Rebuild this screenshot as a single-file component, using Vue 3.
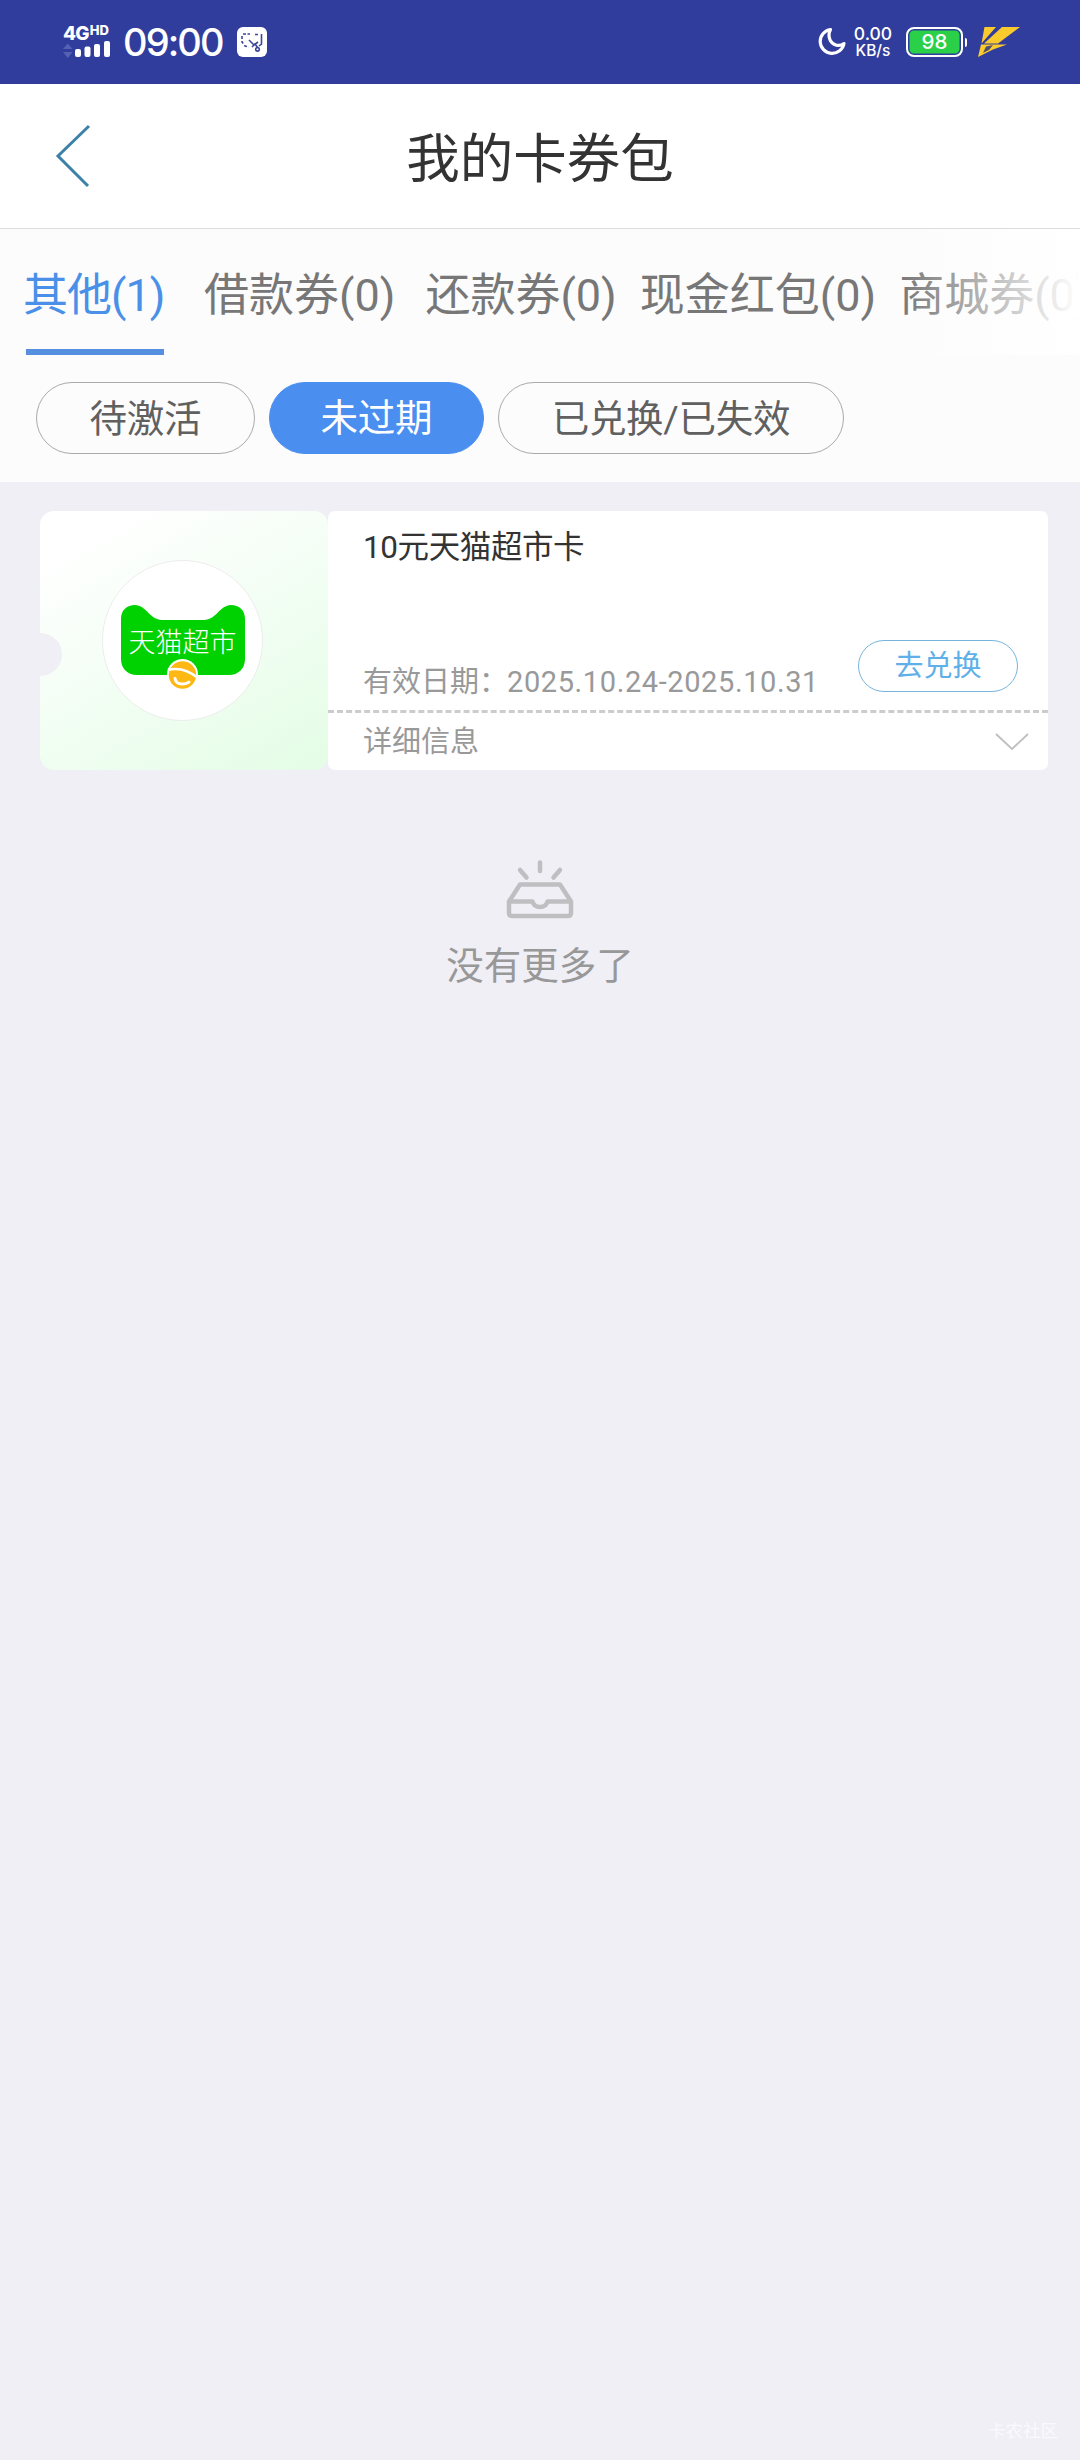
<script setup>
import { ref } from 'vue'

const activeTab = ref(0)
const activeFilter = ref(1)

const tabs = [
  { name: '其他', count: 1 },
  { name: '借款券', count: 0 },
  { name: '还款券', count: 0 },
  { name: '现金红包', count: 0 },
  { name: '商城券', count: 0 }
]

const filters = ['待激活', '未过期', '已兑换/已失效']

const coupon = {
  title: '10元天猫超市卡',
  period: '2025.10.24-2025.10.31'
}
</script>

<template>
  <div class="page">
    <!-- System status bar -->
    <div class="status">
      <div class="network">
        <div class="network-type">4G<span class="network-hd">HD</span></div>
        <svg class="network-bars" width="47" height="18" viewBox="0 0 47 18">
          <path d="M0 8 L4.8 2.5 L9.6 8Z M0 11 L4.8 17 L9.6 11Z" fill="#5661b3" />
          <g fill="#fff">
            <rect x="12" y="8" width="6" height="8" rx="2" />
            <rect x="21.5" y="5.5" width="6" height="10.5" rx="2" />
            <rect x="31" y="3" width="6" height="13" rx="2" />
            <rect x="41" y="0" width="6" height="16" rx="2" />
          </g>
        </svg>
      </div>
      <div class="clock">09:00</div>
      <svg class="app-badge" width="30" height="30" viewBox="0 0 30 30">
        <rect width="30" height="30" rx="6" fill="#fff" />
        <g fill="none" stroke="#3c4799" stroke-width="1.6">
          <path d="M6 7 H13" stroke-dasharray="3 1.5" />
          <path d="M5 9 V15 L8 19 L12 20" stroke-dasharray="3 2" />
          <path d="M18 7.5 H21 M24.5 7 V17 L22 19" />
          <path d="M12 13 L17 18 L21 15 M15 20 L18 17 L21 21" />
          <circle cx="20.5" cy="22.3" r="1.8" />
        </g>
      </svg>
      <div class="status-right">
        <svg class="moon" width="29" height="30" viewBox="0 0 28 30">
          <path
            d="M12 2.5 A12 12 0 1 0 25.5 16.5 C21 20 14.5 18.5 11.8 13.5 C10 10 10.2 6 12 2.5Z"
            fill="none"
            stroke="#fff"
            stroke-width="3.2"
            stroke-linejoin="round"
          />
        </svg>
        <div class="speed">
          <span>0.00</span>
          <span class="speed-unit">KB/s</span>
        </div>
        <div class="battery"><span class="battery-level">98</span></div>
        <svg class="bolt" width="42" height="30" viewBox="0 0 42 30">
          <g fill="#fbcb2e">
            <path d="M6.5 0 H18 L3.5 16.5Z" />
            <path d="M24 0 H42 L20 16.5 H6Z" />
            <path d="M3 17.5 H29 L15 22.5 L0 30Z" />
          </g>
          <path d="M8 19.5 L15 18 L11 23 L5 26Z" fill="#50506a" />
        </svg>
      </div>
    </div>

    <header class="header">
      <svg class="back" width="36" height="64" viewBox="0 0 36 64">
        <path d="M34 2 L3 32 L33 62" fill="none" stroke="#3c82a8" stroke-width="3" />
      </svg>
      <h1 class="title">我的卡券包</h1>
    </header>

    <div class="toolbar">
      <nav class="tabs">
        <div
          v-for="(tab, index) in tabs"
          :key="tab.name"
          class="tab"
          :class="{ 'tab-active': index === activeTab }"
          @click="activeTab = index"
        >
          {{ tab.name }}({{ tab.count }})
        </div>
      </nav>
      <div class="filters">
        <div
          v-for="(filter, index) in filters"
          :key="filter"
          class="filter"
          :class="{ 'filter-active': index === activeFilter }"
          @click="activeFilter = index"
        >
          {{ filter }}
        </div>
      </div>
    </div>

    <section class="coupon">
      <div class="coupon-brand">
        <div class="brand-circle">
          <svg width="124" height="86" viewBox="0 0 124 86">
            <path
              d="M0 14 C0 5 6 0 14 0 C25 0 29 15 41 15 H83 C95 15 99 0 110 0 C118 0 124 5 124 14 V54 C124 64 117 70 108 70 H16 C7 70 0 64 0 54Z"
              fill="#00d100"
            />
            <text class="brand-name" x="61.5" y="47" text-anchor="middle">天猫超市</text>
            <circle cx="61.5" cy="69.5" r="15.5" fill="#fff" />
            <circle cx="61.5" cy="70" r="13.7" fill="#fdb813" />
            <path d="M47 65 Q62 61 77 73" fill="none" stroke="#fff" stroke-width="2.6" />
            <path
              d="M54 73.5 Q55 79 61 79 Q66 79 68 77"
              fill="none"
              stroke="#fff"
              stroke-width="3"
              stroke-linecap="round"
            />
          </svg>
        </div>
      </div>
      <div class="coupon-body">
        <div class="coupon-main">
          <div class="coupon-info">
            <div class="coupon-title">{{ coupon.title }}</div>
            <div class="coupon-period">有效日期：<span class="coupon-dates">{{ coupon.period }}</span></div>
          </div>
          <button class="redeem">去兑换</button>
        </div>
        <div class="coupon-detail">
          <span>详细信息</span>
          <svg width="34" height="18" viewBox="0 0 34 18">
            <path d="M1 1 L17 16 L33 1" fill="none" stroke="#c0c0c0" stroke-width="2" />
          </svg>
        </div>
      </div>
    </section>

    <div class="empty">
      <svg width="68" height="60" viewBox="0 0 68 60" fill="none" stroke="#bfbfc1" stroke-width="4.5">
        <path d="M34 3.5 V12 M14 11 L20.5 18.5 M54 11 L47.5 18.5" stroke-linecap="round" />
        <path
          d="M3 42.5 L14 25.5 H54 L65 42.5 V54 Q65 57 62 57 H6 Q3 57 3 54Z M3 42.5 H26.5 Q28 48 34 48 Q40 48 41.5 42.5 H65"
          stroke-linejoin="round"
        />
      </svg>
      <div class="empty-text">没有更多了</div>
    </div>

    <div class="watermark">卡农社区</div>
  </div>
</template>

<style>
body {
  margin: 0;
  background: #f0eff5;
}
</style>

<style scoped>
.page {
  display: flex;
  flex-direction: column;
  width: 1080px;
  height: 2460px;
  overflow: hidden;
  background: #f0eff5;
  font-family: Roboto, "Noto Sans CJK SC", sans-serif;
}

.status {
  display: flex;
  align-items: center;
  box-sizing: border-box;
  height: 84px;
  padding: 0 60px 0 63px;
  background: #303d9d;
  color: #fff;
  font-family: Inter, sans-serif;
}

.network {
  width: 47px;
  height: 34px;
}

.network-type {
  display: flex;
  height: 16px;
  font-size: 19px;
  font-weight: 800;
  line-height: 17px;
  letter-spacing: -0.8px;
}

.network-hd {
  margin-left: 1px;
  font-size: 13px;
  line-height: 11px;
  letter-spacing: 0;
}

.network-bars {
  display: block;
}

.clock {
  margin-left: 13px;
  width: 101px;
  font-size: 38px;
  font-weight: 500;
  line-height: 40px;
  letter-spacing: -1.9px;
  white-space: nowrap;
}

.app-badge {
  margin-left: 13px;
}

.status-right {
  display: flex;
  align-items: center;
  margin-left: auto;
}

.speed {
  display: flex;
  flex-direction: column;
  align-items: center;
  width: 40px;
  margin-left: 6px;
  font-size: 17.5px;
  font-weight: 500;
  line-height: 17px;
}

.speed-unit {
  font-size: 15.5px;
}

.battery {
  position: relative;
  display: flex;
  align-items: center;
  justify-content: center;
  box-sizing: border-box;
  width: 57px;
  height: 30px;
  margin-left: 13px;
  border: 2.5px solid #fff;
  border-radius: 8px;
  background: #2ad048;
  box-shadow: inset 0 0 0 1.5px #303d9d;
}

.battery::after {
  content: "";
  position: absolute;
  right: -6px;
  width: 2.5px;
  height: 9px;
  border-radius: 0 2px 2px 0;
  background: #fff;
}

.battery-level {
  font-size: 20.5px;
  font-weight: 500;
  line-height: 24px;
}

.bolt {
  margin-left: 15px;
}

.header {
  display: grid;
  grid-template-columns: 1fr auto 1fr;
  align-items: center;
  box-sizing: border-box;
  height: 145px;
  border-bottom: 1px solid #dcdcdc;
  background: #fff;
}

.back {
  margin-left: 55px;
}

.title {
  margin: 0;
  padding-top: 8px;
  color: #333;
  font-size: 53.5px;
  font-weight: 400;
  line-height: 60px;
}

.toolbar {
  height: 253px;
  background: #fcfcfc;
}

.tabs {
  position: relative;
  display: flex;
  height: 126px;
  padding-left: 26px;
  overflow: hidden;
}

/* Fades the tabs that run off the right edge */
.tabs::after {
  content: "";
  position: absolute;
  top: 0;
  right: 0;
  width: 180px;
  height: 126px;
  background: linear-gradient(to right, rgba(255, 255, 255, 0), #fff);
}

.tab {
  flex: none;
  box-sizing: border-box;
  height: 126px;
  margin-right: 23px;
  color: #777;
  font-size: 45px;
  line-height: 133px;
  white-space: nowrap;
}

.tab:nth-child(1) {
  width: 138px;
  margin-right: 40px;
  letter-spacing: -1px;
  text-indent: -3px;
}

.tab:nth-child(2) {
  margin-right: 30px;
}

.tab-active {
  border-bottom: 6px solid #568fdf;
  color: #4a90e8;
}

.filters {
  display: flex;
  padding: 27px 0 0 36px;
}

.filter {
  box-sizing: border-box;
  height: 72px;
  margin-right: 14px;
  padding: 0 52.5px;
  border: 1px solid #aaa;
  border-radius: 36px;
  color: #606060;
  font-size: 37.5px;
  line-height: 73px;
  letter-spacing: -0.3px;
}

.filter-active {
  padding: 0 51px;
  border-color: #4a8ef0;
  background: #4a8ef0;
  color: #fff;
  line-height: 70px;
}

.coupon {
  display: flex;
  height: 259px;
  margin: 29px 32px 0 40px;
}

.coupon-brand {
  position: relative;
  display: flex;
  align-items: center;
  justify-content: center;
  box-sizing: border-box;
  width: 288px;
  padding-right: 3px;
  border-radius: 14px;
  background: linear-gradient(150deg, #fff 12%, #e5fde7 95%);
  overflow: hidden;
}

/* Ticket notch */
.coupon-brand::before {
  content: "";
  position: absolute;
  top: 122px;
  left: -21px;
  width: 43px;
  height: 43px;
  border-radius: 50%;
  background: #f0eff5;
}

.brand-circle {
  display: flex;
  justify-content: center;
  box-sizing: border-box;
  width: 161px;
  height: 161px;
  padding-top: 44px;
  border: 1px solid #ececec;
  border-radius: 50%;
  background: #fff;
}

.brand-name {
  fill: #fff;
  font-size: 27px;
  font-weight: 300;
}

.coupon-body {
  flex: 1;
  border-radius: 7px;
  background: #fff;
}

.coupon-main {
  display: flex;
  align-items: flex-end;
  justify-content: space-between;
  box-sizing: border-box;
  height: 202px;
  padding: 0 30px 0 35px;
  border-bottom: 3px dashed #ccc;
}

.coupon-info {
  display: flex;
  flex-direction: column;
  justify-content: space-between;
  box-sizing: border-box;
  height: 199px;
  padding: 17px 0 8px;
}

.coupon-title {
  color: #333;
  font-size: 31.5px;
  line-height: 40px;
  letter-spacing: -0.4px;
}

.coupon-period {
  color: #999;
  font-size: 29px;
  line-height: 40px;
}

.coupon-dates {
  margin-left: -1px;
  letter-spacing: 0.6px;
}

.redeem {
  box-sizing: border-box;
  width: 160px;
  height: 52px;
  margin-bottom: 18px;
  padding: 0;
  border: 1px solid #78b4dc;
  border-radius: 26px;
  background: #fff;
  color: #5fb0e8;
  font-family: inherit;
  font-size: 29px;
  line-height: 48px;
}

.coupon-detail {
  display: flex;
  align-items: center;
  justify-content: space-between;
  height: 57px;
  padding: 0 19px 0 35px;
  color: #999;
  font-size: 29px;
}

.coupon-detail span {
  padding-bottom: 5px;
}

.empty {
  display: flex;
  flex-direction: column;
  align-items: center;
  margin-top: 89px;
}

.empty-text {
  margin-top: 22px;
  color: #989898;
  font-size: 37.5px;
  line-height: 50px;
}

.watermark {
  margin: auto 22px 16px auto;
  color: #fafafd;
  font-size: 17.5px;
  line-height: 26px;
}
</style>
